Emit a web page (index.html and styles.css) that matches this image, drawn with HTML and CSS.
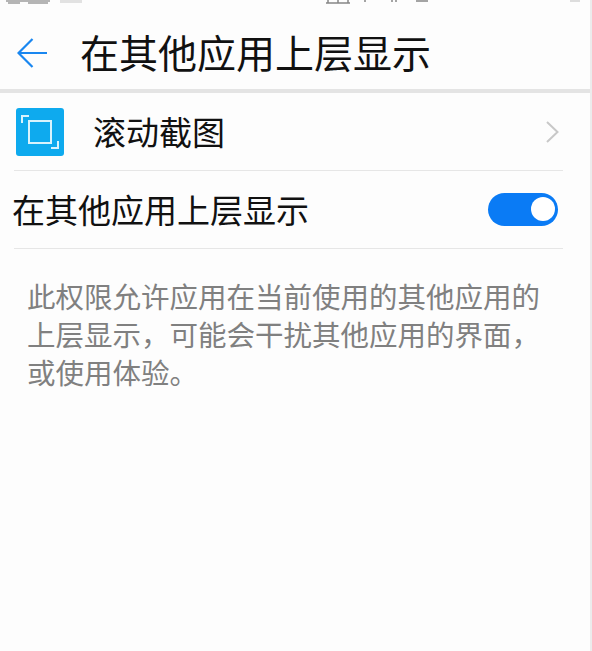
FILE: index.html
```html
<!DOCTYPE html>
<html lang="zh">
<head>
    <title>在其他应用上层显示</title>
    <link rel="stylesheet" href="styles.css">
</head>
<body>
    <div class="screen">
        <!-- status bar is cropped off in the screenshot, only the bottom edge of it shows -->
        <div class="statusbar">
            <svg width="590" height="6" viewBox="0 0 590 6">
                <path d="M6 1H50M8 3H20M28 3H48" stroke="#777" stroke-width="1.500" opacity="0.7"/>
                <rect x="60" y="0" width="22" height="3" fill="#e2e2e2"/>
                <path d="M326 3H350M328 0V3M338 0V3M348 0V3M365 0V2M392 0V2M396 0V2M416 1H428" stroke="#555" stroke-width="1.500" opacity="0.7"/>
                <rect x="570" y="0" width="10" height="2" fill="#ddd"/>
            </svg>
        </div>
        <div class="toolbar">
            <svg class="back" width="30" height="30" viewBox="0 0 30 30">
                <path d="M30 15H2M15.500 1L1.500 15L15.500 29" fill="none" stroke="#1a87f0" stroke-width="2.2"/>
            </svg>
            <h1>在其他应用上层显示</h1>
        </div>
        <div class="list">
            <div class="row">
                <div class="app-icon">
                    <svg width="48" height="48" viewBox="0 0 48 48">
                        <rect x="13" y="13" width="22" height="22" fill="none" stroke="#d8f3fd" stroke-width="2"/>
                        <path d="M6 15V8H13M42 33V40H35" fill="none" stroke="#d8f3fd" stroke-width="2"/>
                    </svg>
                </div>
                <span class="app-name">滚动截图</span>
                <svg class="chevron" width="13" height="22" viewBox="0 0 13 22">
                    <path d="M1 1L11.500 11L1 21" fill="none" stroke="#c8c8c8" stroke-width="2"/>
                </svg>
            </div>
            <div class="row">
                <span class="switch-label">在其他应用上层显示</span>
                <div class="switch"><div class="knob"></div></div>
            </div>
        </div>
        <p class="note">此权限允许应用在当前使用的其他应用的<br>上层显示，可能会干扰其他应用的界面，<br>或使用体验。</p>
    </div>
</body>
</html>
```

FILE: styles.css
```css
body {
    margin: 0;
    background: #fdfdfd;
    font-family: "Noto Sans CJK SC", "Liberation Sans", sans-serif;
    color: #111;
}
.screen {
    height: 651px;
    overflow: hidden;
    border-right: 2px solid #ececec;
    box-sizing: border-box;
}
.statusbar {
    height: 6px;
}
.statusbar svg {
    display: block;
}
.toolbar {
    height: 73px;
    padding-top: 10px;
    display: flex;
    align-items: center;
    padding-left: 17px;
    border-bottom: 4px solid #e4e4e4;
}
.toolbar h1 {
    margin: 0 0 4px 33px;
    font-size: 39px;
    font-weight: 400;
    line-height: 50px;
    color: #111;
}
.list {
    padding-left: 14px;
    width: 549px;
}
.row {
    display: flex;
    align-items: center;
    border-bottom: 1px solid #e6e6e6;
    height: 77px;
}
.app-icon {
    width: 48px;
    height: 48px;
    margin-left: 2px;
    background: #0eaaee;
    border-radius: 3px;
}
.app-icon svg {
    display: block;
}
.app-name {
    margin: 0 0 2px 29px;
    font-size: 33px;
    flex: 1;
}
.chevron {
    margin-right: 4px;
}
.switch-label {
    margin: 0 0 2px -2px;
    font-size: 33px;
    flex: 1;
}
.switch {
    width: 70px;
    height: 33px;
    margin: 0 5px 1px 0;
    background: #0a7bf5;
    border-radius: 17px;
    display: flex;
    justify-content: flex-end;
    align-items: center;
    padding-right: 3px;
    box-sizing: border-box;
}
.knob {
    width: 24px;
    height: 24px;
    background: #fff;
    border-radius: 50%;
}
.note {
    margin: 28px 0 0 27px;
    font-size: 28.5px;
    line-height: 38px;
    color: #808080;
}
```
